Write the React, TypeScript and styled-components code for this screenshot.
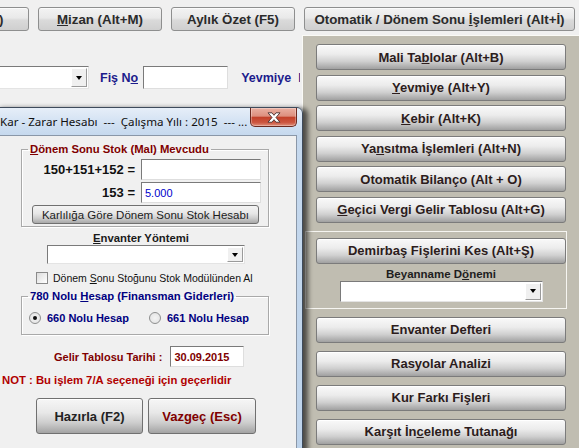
import React from "react";
import styled, { createGlobalStyle } from "styled-components";

const Global = createGlobalStyle`
  html, body { margin: 0; padding: 0; background: #f0f0f0; }
  body { font-family: "Liberation Sans", Arial, sans-serif; }
`;

const Page = styled.div`
  position: relative;
  width: 579px;
  height: 448px;
  overflow: hidden;
  background: #f0f0f0;
  font-family: "Liberation Sans", Arial, sans-serif;
`;

const U = styled.span`
  text-decoration: underline;
  text-underline-offset: 1px;
`;

const Label = styled.span`
  white-space: pre;
`;

/* ---------- top toolbar ---------- */
const Toolbar = styled.div`
  display: flex;
  gap: 9px;
  height: 35px;
  padding-top: 7px;
  box-sizing: border-box;
  margin-left: -95px;
`;

const ToolButton = styled.div<{ $w: number }>`
  flex: none;
  width: ${(p) => p.$w}px;
  height: 24px;
  box-sizing: border-box;
  border: 1px solid #8e8f8f;
  border-radius: 3px;
  background: linear-gradient(#f3f3f3 0%, #e9e9e9 45%, #dadada 55%, #cfcfcf 100%);
  box-shadow: inset 0 1px 0 #fbfbfb;
  display: flex;
  align-items: center;
  justify-content: center;
  font-weight: bold;
  font-size: 13.3px;
  color: #2b2b2b;
  white-space: nowrap;
`;

/* ---------- main area ---------- */
const Main = styled.div`
  display: flex;
  height: 413px;
`;

const LeftArea = styled.div`
  flex: none;
  width: 302px;
  overflow: hidden;
`;

const FormRow = styled.div`
  display: flex;
  align-items: center;
  margin-top: 31px;
  height: 23px;
  white-space: nowrap;
`;

const Combo = styled.div<{ $w: number; $h: number; $ml?: number; $center?: boolean }>`
  flex: none;
  width: ${(p) => p.$w}px;
  height: ${(p) => p.$h}px;
  margin-left: ${(p) => p.$ml ?? 0}px;
  align-self: ${(p) => (p.$center ? "center" : "auto")};
  box-sizing: border-box;
  display: flex;
  justify-content: flex-end;
  align-items: stretch;
  padding: 1px;
  background: #fff;
  border: 1px solid;
  border-color: #7a7a7a #e4e4e4 #e4e4e4 #7a7a7a;
`;

const ComboArrow = styled.div`
  width: 16px;
  box-sizing: border-box;
  background: #f0f0f0;
  border: 1px solid;
  border-color: #ffffff #9a9a9a #9a9a9a #ffffff;
  display: flex;
  align-items: center;
  justify-content: center;
`;

const Triangle = styled.span`
  width: 0;
  height: 0;
  border-left: 3.5px solid transparent;
  border-right: 3.5px solid transparent;
  border-top: 4px solid #000;
`;

const FieldLabel = styled.span<{ $ml: number; $max?: number }>`
  flex: none;
  margin-left: ${(p) => p.$ml}px;
  max-width: ${(p) => (p.$max ? `${p.$max}px` : "none")};
  overflow: hidden;
  font-weight: bold;
  font-size: 12.5px;
  color: #1c1c8c;
`;

const TextBox = styled.div<{ $w: number; $h: number; $ml?: number; $color?: string; $bold?: boolean }>`
  flex: none;
  width: ${(p) => p.$w}px;
  height: ${(p) => p.$h}px;
  margin-left: ${(p) => p.$ml ?? 0}px;
  box-sizing: border-box;
  background: #fff;
  border: 1px solid;
  border-color: #7a7a7a #dedede #dedede #7a7a7a;
  padding-left: 3px;
  display: flex;
  align-items: center;
  font-size: 11px;
  font-weight: ${(p) => (p.$bold ? "bold" : "normal")};
  color: ${(p) => p.$color ?? "#000"};
`;

/* ---------- side panel ---------- */
const SidePanel = styled.div`
  flex: none;
  width: 277px;
  box-sizing: border-box;
  background: #c0bdb1;
  border-top: 1px solid #fafaf6;
  border-left: 1px solid #fafaf6;
  padding: 8px 13px 0 13px;
  display: flex;
  flex-direction: column;
`;

const ButtonStack = styled.div<{ $gap: number; $top: number }>`
  display: flex;
  flex-direction: column;
  gap: ${(p) => p.$gap}px;
  margin-top: ${(p) => p.$top}px;
`;

const PanelButton = styled.div`
  flex: none;
  height: 26px;
  box-sizing: border-box;
  border: 1px solid #7b7b7b;
  border-radius: 3px;
  background: linear-gradient(#f9f9f9 0%, #ececec 38%, #d0d0d0 68%, #a0a0a0 100%);
  box-shadow: inset 0 1px 0 #ffffff;
  display: flex;
  align-items: center;
  justify-content: center;
  font-weight: bold;
  font-size: 13px;
  color: #2c1c1c;
  white-space: nowrap;
`;

const PanelGroup = styled.div`
  margin: 8px -1px 0 -11px;
  border: 1px solid #f6f5f1;
  padding: 6px 0 6px 10px;
  display: flex;
  flex-direction: column;
`;

const PanelCaption = styled.div`
  margin-top: 3px;
  line-height: 14px;
  text-align: center;
  font-weight: bold;
  font-size: 11.5px;
  color: #1e1e1e;
`;

/* ---------- dialog (window over the page) ---------- */
const Dialog = styled.div`
  position: absolute;
  left: -8px;
  top: 107px;
  width: 311px;
  height: 370px;
  box-sizing: border-box;
  border: 1px solid #3e4b5c;
  border-radius: 6px 6px 0 0;
  background: linear-gradient(#e6eef8 0px, #d3e2f3 14px, #c6d9ee 27px, #bcd2ea 100%);
  padding: 0 5px 0 6px;
  box-shadow: 5px 1px 5px rgba(0, 0, 0, 0.6);
  display: flex;
  flex-direction: column;
`;

const TitleBar = styled.div`
  height: 27px;
  flex: none;
  display: flex;
  align-items: center;
  padding-left: 1px;
`;

const TitleText = styled.div`
  flex: 1;
  white-space: pre;
  overflow: hidden;
  font-family: "Noto Sans", "Open Sans", sans-serif;
  font-size: 11.6px;
  color: #101010;
`;

const CloseButton = styled.div`
  align-self: flex-start;
  flex: none;
  width: 47px;
  height: 19px;
  box-sizing: border-box;
  border: 1px solid #6b2a20;
  border-top: none;
  border-radius: 0 0 5px 5px;
  background: linear-gradient(#eab0a2 0%, #dd8f7e 45%, #c3412a 52%, #cc5640 80%, #df8f7b 100%);
  box-shadow: inset 0 0 0 1px rgba(255, 255, 255, 0.3);
  display: flex;
  align-items: center;
  justify-content: center;
`;

const Client = styled.div`
  flex: 1;
  background: #f0f0f0;
  border: 1px solid #8a97a8;
  display: flex;
  flex-direction: column;
  align-items: flex-start;
`;

const GroupBox = styled.fieldset<{ $top: number; $pb: number }>`
  margin: ${(p) => p.$top}px 0 0 21px;
  width: 248px;
  min-width: 0;
  box-sizing: border-box;
  padding: 0 0 ${(p) => p.$pb}px 0;
  border: 1px solid #a9a9a9;
  box-shadow: inset 1px 1px 0 #ffffff, 1px 1px 0 #ffffff;
`;

const Legend = styled.legend<{ $color: string }>`
  margin-left: 6px;
  padding: 0 2px;
  line-height: 13px;
  font-weight: bold;
  font-size: 11.3px;
  color: ${(p) => p.$color};
`;

const AmountGrid = styled.div`
  display: grid;
  grid-template-columns: 113px 120px;
  column-gap: 6px;
  row-gap: 2px;
  margin-top: 3px;
  align-items: center;
`;

const AmountLabel = styled.div`
  text-align: right;
  font-weight: bold;
  font-size: 13px;
  color: #111;
`;

const SmallButton = styled.div`
  margin: 2px 0 0 10px;
  width: 227px;
  height: 19px;
  box-sizing: border-box;
  border: 1px solid #707070;
  border-radius: 3px;
  background: linear-gradient(#f4f4f4 0%, #e6e6e6 45%, #cfcfcf 70%, #a9a9a9 100%);
  display: flex;
  align-items: center;
  justify-content: center;
  font-size: 11.5px;
  color: #1c1c1c;
  white-space: nowrap;
`;

const Caption = styled.div`
  margin-top: 4px;
  width: 282px;
  line-height: 14px;
  text-align: center;
  font-weight: bold;
  font-size: 11.3px;
  color: #1a1a1a;
`;

const CheckRow = styled.label`
  margin: 8px 0 0 36px;
  height: 12px;
  display: flex;
  align-items: center;
  gap: 5px;
  font-size: 10.5px;
  color: #111;
  white-space: nowrap;
`;

const CheckBox = styled.span`
  width: 12px;
  height: 12px;
  box-sizing: border-box;
  border: 1px solid #8a8a8a;
  background: linear-gradient(135deg, #dcdcdc, #ffffff);
`;

const RadioRow = styled.div`
  margin: 9px 0 0 7px;
  display: flex;
  height: 12px;
`;

const RadioItem = styled.div<{ $w?: number }>`
  width: ${(p) => (p.$w ? `${p.$w}px` : "auto")};
  display: flex;
  align-items: center;
  gap: 6px;
  font-weight: bold;
  font-size: 11px;
  color: #000080;
  white-space: nowrap;
`;

const Radio = styled.span<{ $checked?: boolean }>`
  width: 12px;
  height: 12px;
  box-sizing: border-box;
  border-radius: 50%;
  border: 1px solid #8e8f8f;
  background: radial-gradient(circle, #f4f4f4 0%, #e0e0e0 100%);
  display: flex;
  align-items: center;
  justify-content: center;
  &::after {
    content: "";
    width: 4px;
    height: 4px;
    border-radius: 50%;
    background: ${(p) => (p.$checked ? "#111" : "transparent")};
  }
`;

const DateRow = styled.div`
  margin: 11px 0 0 54px;
  display: flex;
  align-items: center;
  gap: 8px;
`;

const DateLabel = styled.span`
  font-weight: bold;
  font-size: 11px;
  color: #800000;
`;

const Note = styled.div`
  margin: 6px 0 0 2px;
  line-height: 14px;
  font-weight: bold;
  font-size: 11.3px;
  color: #b00000;
  white-space: nowrap;
`;

const ActionRow = styled.div`
  margin: 11px 0 0 36px;
  display: flex;
  gap: 5px;
`;

const ActionButton = styled.div<{ $w: number; $color: string }>`
  width: ${(p) => p.$w}px;
  height: 36px;
  box-sizing: border-box;
  border: 1px solid #707070;
  border-radius: 3px;
  background: linear-gradient(#f6f6f6 0%, #e8e8e8 40%, #cdcdcd 70%, #a3a3a3 100%);
  box-shadow: inset 0 1px 0 #ffffff;
  display: flex;
  align-items: center;
  justify-content: center;
  font-weight: bold;
  font-size: 13px;
  color: ${(p) => p.$color};
`;

const CloseGlyph = () => (
  <svg width="14" height="11" viewBox="0 0 14 11">
    <path
      d="M1 0.8 H5 L7 3.3 L9 0.8 H13 L9 5.5 L13 10.2 H9 L7 7.7 L5 10.2 H1 L5 5.5 Z"
      fill="#ffffff"
      stroke="#4a3030"
      strokeWidth="0.9"
      strokeLinejoin="round"
    />
  </svg>
);

export default function App() {
  return (
    <>
      <Global />
      <Page>
        <Toolbar>
          <ToolButton $w={124}>
            <Label>Fiş Ara (F3)</Label>
          </ToolButton>
          <ToolButton $w={124}>
            <Label>
              <U>M</U>izan (Alt+M)
            </Label>
          </ToolButton>
          <ToolButton $w={124}>
            <Label>Aylık Özet (F5)</Label>
          </ToolButton>
          <ToolButton $w={271}>
            <Label>
              {"Otomatik / Dönem Sonu "}
              <U>İ</U>
              {"şlemleri (Alt+İ)"}
            </Label>
          </ToolButton>
        </Toolbar>
        <Main>
          <LeftArea>
            <FormRow>
              <Combo $w={149} $h={23} $ml={-60}>
                <ComboArrow>
                  <Triangle />
                </ComboArrow>
              </Combo>
              <FieldLabel $ml={11}>
                Fiş N<U>o</U>
              </FieldLabel>
              <TextBox $w={85} $h={23} $ml={5} />
              <FieldLabel $ml={13} $max={59}>
                {"Yevmiye\u00a0 No"}
              </FieldLabel>
            </FormRow>
          </LeftArea>
          <SidePanel>
            <ButtonStack $gap={4.6} $top={0}>
              <PanelButton>
                <Label>
                  Mali Ta<U>b</U>lolar (Alt+B)
                </Label>
              </PanelButton>
              <PanelButton>
                <Label>
                  <U>Y</U>evmiye (Alt+Y)
                </Label>
              </PanelButton>
              <PanelButton>
                <Label>
                  <U>K</U>ebir (Alt+K)
                </Label>
              </PanelButton>
              <PanelButton>
                <Label>
                  Ya<U>n</U>sıtma İşlemleri (Alt+N)
                </Label>
              </PanelButton>
              <PanelButton>
                <Label>Otomatik Bilanço (Alt + O)</Label>
              </PanelButton>
              <PanelButton>
                <Label>
                  <U>G</U>eçici Vergi Gelir Tablosu (Alt+G)
                </Label>
              </PanelButton>
            </ButtonStack>
            <PanelGroup>
              <PanelButton>
                <Label>Demirbaş Fişlerini Kes (Alt+Ş)</Label>
              </PanelButton>
              <PanelCaption>
                Beyanname D<U>ö</U>nemi
              </PanelCaption>
              <Combo $w={203} $h={21} $center>
                <ComboArrow>
                  <Triangle />
                </ComboArrow>
              </Combo>
            </PanelGroup>
            <ButtonStack $gap={8} $top={8}>
              <PanelButton>
                <Label>Envanter Defteri</Label>
              </PanelButton>
              <PanelButton>
                <Label>Rasyolar Analizi</Label>
              </PanelButton>
              <PanelButton>
                <Label>Kur Farkı Fişleri</Label>
              </PanelButton>
              <PanelButton>
                <Label>
                  Karşıt İn<U>c</U>eleme Tutanağı
                </Label>
              </PanelButton>
            </ButtonStack>
          </SidePanel>
        </Main>

        <Dialog>
          <TitleBar>
            <TitleText>{"Kar - Zarar Hesabı  ---  Çalışma Yılı : 2015  --- ..."}</TitleText>
            <CloseButton>
              <CloseGlyph />
            </CloseButton>
          </TitleBar>
          <Client>
            <GroupBox $top={7} $pb={2}>
              <Legend $color="#800000">
                <U>D</U>önem Sonu Stok (Mal) Mevcudu
              </Legend>
              <AmountGrid>
                <AmountLabel>150+151+152 =</AmountLabel>
                <TextBox $w={120} $h={21} />
                <AmountLabel>153 =</AmountLabel>
                <TextBox $w={120} $h={21} $color="#0000cc">
                  5.000
                </TextBox>
              </AmountGrid>
              <SmallButton>
                <Label>Karlılığa Göre Dönem Sonu Stok Hesabı</Label>
              </SmallButton>
            </GroupBox>
            <Caption>
              <U>E</U>nvanter Yöntemi
            </Caption>
            <Combo $w={198} $h={19} $ml={47}>
              <ComboArrow>
                <Triangle />
              </ComboArrow>
            </Combo>
            <CheckRow>
              <CheckBox />
              <span>
                Dönem <U>S</U>onu Stoğunu Stok Modülünden Al
              </span>
            </CheckRow>
            <GroupBox $top={6} $pb={10}>
              <Legend $color="#000080">
                780 Nolu <U>H</U>esap (Finansman Giderleri)
              </Legend>
              <RadioRow>
                <RadioItem $w={120}>
                  <Radio $checked />
                  <Label>660 Nolu Hesap</Label>
                </RadioItem>
                <RadioItem>
                  <Radio />
                  <Label>661 Nolu Hesap</Label>
                </RadioItem>
              </RadioRow>
            </GroupBox>
            <DateRow>
              <DateLabel>Gelir Tablosu Tarihi :</DateLabel>
              <TextBox $w={74} $h={21} $color="#800000" $bold>
                30.09.2015
              </TextBox>
            </DateRow>
            <Note>NOT : Bu işlem 7/A seçeneği için geçerlidir</Note>
            <ActionRow>
              <ActionButton $w={107} $color="#222222">
                <Label>Hazırla (F2)</Label>
              </ActionButton>
              <ActionButton $w={108} $color="#800000">
                <Label>Vazgeç (Esc)</Label>
              </ActionButton>
            </ActionRow>
          </Client>
        </Dialog>
      </Page>
    </>
  );
}
